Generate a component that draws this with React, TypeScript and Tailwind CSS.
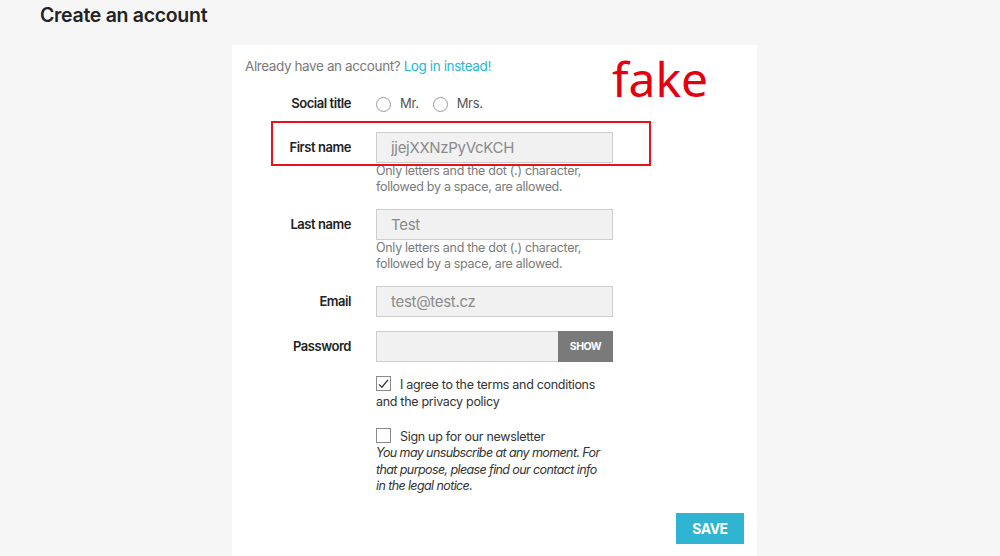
import React from "react";

const labelCls =
  "w-[119px] shrink-0 text-right text-[13px] font-semibold tracking-[-0.45px] text-[#232323]";
const inputCls =
  "h-[31px] w-[237px] border border-[#cdcdcd] bg-[#f1f1f1] pl-[14px] text-[15px] tracking-[-0.3px] text-[#8a8a8a] outline-none";
const helpCls = "ml-[144px] text-[12.5px] leading-[16px] tracking-[-0.3px] text-[#7a7a7a]";

const Radio = ({ label }: { label: string }) => (
  <span className="flex items-center">
    <span className="h-[15px] w-[15px] rounded-full border border-[#9a9a9a] bg-white" />
    <span className="ml-[9px] mr-[14px] text-[13px] tracking-[-0.3px] text-[#555]">{label}</span>
  </span>
);

const Check = ({ checked }: { checked?: boolean }) => (
  <span className="mr-[9px] inline-flex h-[15px] w-[15px] translate-y-[2px] items-center justify-center border border-[#8a8a8a] bg-white align-baseline">
    {checked && (
      <svg viewBox="0 0 16 16" className="h-[14px] w-[14px]">
        <path d="M2.5 8.5 L6 12 L13.5 3" fill="none" stroke="#333" strokeWidth="1.6" />
      </svg>
    )}
  </span>
);

const App = () => {
  return (
    <div className="relative h-[556px] w-[1000px] overflow-hidden bg-[#f6f6f6] font-['Inter',sans-serif]">
      <h1 className="pl-[40px] pt-[2px] text-[19.5px] font-semibold leading-[26px] tracking-[-0.3px] text-[#232323]">
        Create an account
      </h1>
      <section className="relative ml-[232px] mt-[17px] h-[520px] w-[525px] bg-white">
        <p className="pl-[13px] pt-[11px] text-[13.5px] leading-[20px] tracking-[-0.4px] text-[#7a7a7a]">
          Already have an account?{" "}
          <a className="text-[#24b9d7]">Log in instead!</a>
        </p>

        <div className="mt-[18px] flex h-[20px] items-center">
          <span className={labelCls}>Social title</span>
          <div className="ml-[25px] flex items-center">
            <Radio label="Mr." />
            <Radio label="Mrs." />
          </div>
        </div>

        <div className="mt-[18px] flex items-center">
          <span className={labelCls}>First name</span>
          <input className={`ml-[25px] ${inputCls}`} defaultValue="jjejXXNzPyVcKCH" />
        </div>
        <p className={helpCls}>
          Only letters and the dot (.) character,
          <br />
          followed by a space, are allowed.
        </p>

        <div className="mt-[14px] flex items-center">
          <span className={labelCls}>Last name</span>
          <input className={`ml-[25px] ${inputCls}`} defaultValue="Test" />
        </div>
        <p className={helpCls}>
          Only letters and the dot (.) character,
          <br />
          followed by a space, are allowed.
        </p>

        <div className="mt-[14px] flex items-center">
          <span className={labelCls}>Email</span>
          <input className={`ml-[25px] ${inputCls}`} defaultValue="test@test.cz" />
        </div>

        <div className="mt-[14px] flex items-center">
          <span className={labelCls}>Password</span>
          <div className="ml-[25px] flex h-[31px] w-[237px]">
            <input
              type="password"
              className="h-full w-0 min-w-0 flex-1 border border-r-0 border-[#cdcdcd] bg-[#f1f1f1] outline-none"
            />
            <button className="h-full w-[55px] shrink-0 bg-[#7a7a7a] text-[10.5px] font-bold tracking-[-0.5px] text-white">
              SHOW
            </button>
          </div>
        </div>

        <p className="ml-[144px] mt-[12px] text-[12.5px] leading-[17px] tracking-[-0.3px] text-[#333]">
          <Check checked />I agree to the terms and conditions
          <br />
          and the privacy policy
        </p>

        <div className="ml-[144px] mt-[16px] text-[12.5px] tracking-[-0.3px] text-[#333]">
          <p className="leading-[16.5px]">
            <Check />
            Sign up for our newsletter
          </p>
          <p className="italic leading-[16.5px] tracking-[-0.6px]">
            You may unsubscribe at any moment. For
            <br />
            that purpose, please find our contact info
            <br />
            in the legal notice.
          </p>
        </div>

        <div className="mt-[18px] flex justify-end pr-[13px]">
          <button className="h-[31px] w-[68px] bg-[#2fb5d2] text-[14px] font-bold tracking-[-0.5px] text-white">
            SAVE
          </button>
        </div>

        {/* annotation overlay */}
        <div className="pointer-events-none absolute left-[39px] top-[76px] h-[45px] w-[380px] border-2 border-[#e3141c]" />
        <span className="pointer-events-none absolute left-[380px] top-[10px] font-['Noto_Sans',sans-serif] text-[48px] leading-none text-[#e3000f]">
          fake
        </span>
      </section>
    </div>
  );
};

export default App;
